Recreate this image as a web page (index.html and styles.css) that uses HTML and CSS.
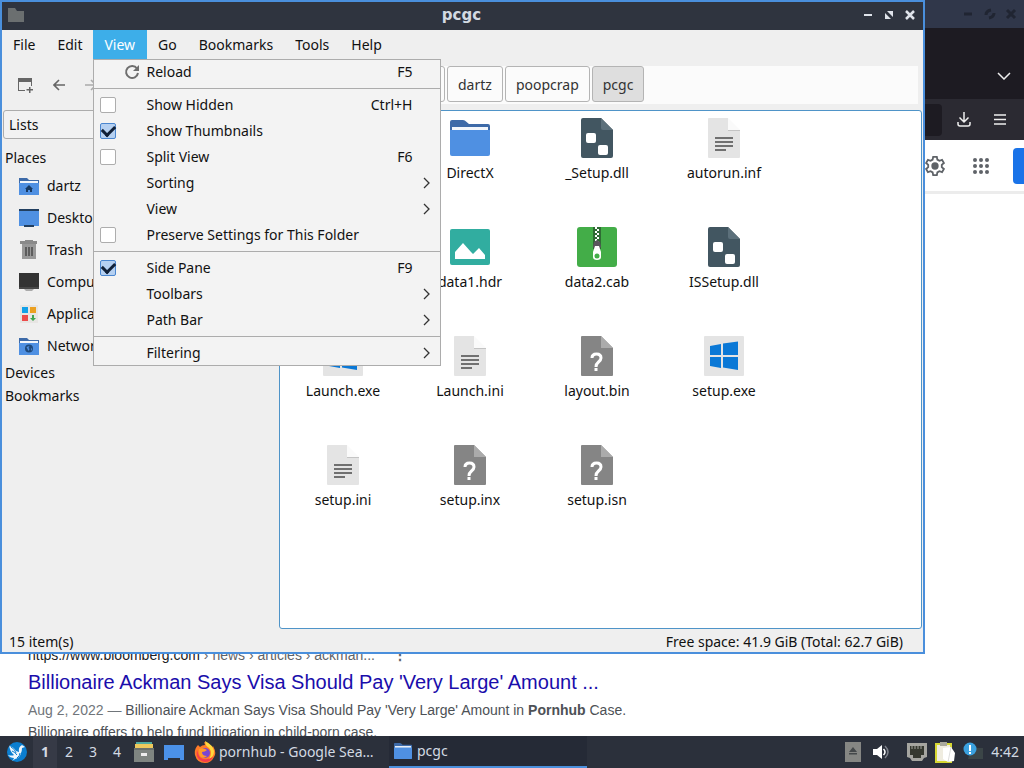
FILE: index.html
```html
<!DOCTYPE html>
<html lang="en">
<head>
  <meta charset="UTF-8">
  <title>pcgc</title>
  <link rel="stylesheet" href="styles.css">
</head>
<body>
  <!-- shared icon shapes -->
  <svg class="defs" aria-hidden="true">
    <symbol id="folder" viewBox="0 0 40 40">
      <path d="M0 4q0-2 2-2h11q2 0 3 1.500l3 2.500h19q2 0 2 2v10H0z" fill="#3d6aa8"/>
      <path d="M2 9h36v6H2z" fill="#f2f6fb"/>
      <path d="M0 12h40v24q0 2-2 2H2q-2 0-2-2z" fill="#4f90e2"/>
    </symbol>
    <symbol id="dll" viewBox="0 0 40 40">
      <path d="M6 0h18l12 12v26q0 2-2 2H6q-2 0-2-2V2q0-2 2-2z" fill="#425661"/>
      <path d="M24 0l12 12H26q-2 0-2-2z" fill="#5c707b"/>
      <rect x="9" y="15" width="10" height="10" rx="2" fill="#fff"/>
      <rect x="21" y="27" width="10" height="10" rx="2" fill="#fff"/>
    </symbol>
    <symbol id="text" viewBox="0 0 40 40">
      <path d="M5 0h19v12h12v27q0 1-1 1H5q-1 0-1-1V1q0-1 1-1z" fill="#e4e4e4"/>
      <path d="M24 12h12v1H24z" fill="#c4c4c4"/>
      <path d="M24 0l12 12H24z" fill="#fafafa"/>
      <path d="M11 20h18M11 24h18M11 28h18M11 32h11" stroke="#707070" stroke-width="2"/>
    </symbol>
    <symbol id="unknown" viewBox="0 0 40 40">
      <path d="M5 0h19l12 12v27q0 1-1 1H5q-1 0-1-1V1q0-1 1-1z" fill="#858585"/>
      <path d="M24 0l12 12H24z" fill="#ababab"/>
      <path d="M15 22q0-4 4.500-4t4.500 4q0 2-2.500 4t-2.500 5" fill="none" stroke="#fff" stroke-width="3"/>
      <path d="M17.500 32h3v3h-3z" fill="#fff"/>
    </symbol>
    <symbol id="exe" viewBox="0 0 40 40">
      <rect width="40" height="40" rx="1" fill="#e4e4e4"/>
      <path d="M6 10l11-2v11H6zM19 7.500L34 5.500V19H19zM6 21h11v11L6 30zM19 21h15v13l-15-2.500z" fill="#0a78d6"/>
    </symbol>
    <symbol id="image" viewBox="0 0 40 40">
      <rect y="2" width="40" height="36" rx="2" fill="#31ada0"/>
      <path d="M5 32v-7l8-9 8 9 2 2 6-6 6 7v4z" fill="#fff"/>
    </symbol>
    <symbol id="archive" viewBox="0 0 40 40">
      <rect width="40" height="40" rx="3" fill="#43ad48"/>
      <path d="M16 0h8v22h-8z" fill="#2f6b34"/>
      <path d="M19 0v16" stroke="#fff" stroke-width="2" stroke-dasharray="2 2"/>
      <path d="M21 2v16" stroke="#fff" stroke-width="2" stroke-dasharray="2 2"/>
      <path d="M17 15l-1 5 3 2h2l3-2-1-5-3-2z" fill="#5b565e"/>
      <path d="M18 19h4l2 6v5q0 3-4 3t-4-3v-5z" fill="#fff"/>
      <circle cx="20" cy="29" r="2.500" fill="#43ad48"/>
    </symbol>
    <symbol id="arrow" viewBox="0 0 8 12">
      <path d="M1 1l5 5-5 5" fill="none" stroke="#333" stroke-width="1.300"/>
    </symbol>
  </svg>

  <main class="desktop">
    <section class="browser">
      <div class="browser-title">
        <svg width="56" height="16" viewBox="0 0 56 16" stroke="#202532" stroke-width="3" fill="none"><path d="M2 8h8M24 9q0-4 5-5M32 7q0 4-5 5M45 4l8 8M53 4l-8 8"/></svg>
      </div>
      <div class="tabs">
        <button aria-label="List all tabs"><svg width="14" height="8" viewBox="0 0 14 8"><path d="M1 1l6 6 6-6" fill="none" stroke="#eee" stroke-width="1.500"/></svg></button>
      </div>
      <div class="browser-nav">
        <div class="address"></div>
        <button aria-label="Downloads"><svg width="14" height="16" viewBox="0 0 14 16" fill="none" stroke="#eee" stroke-width="1.500"><path d="M7 0v10M2.500 5.500L7 10l4.500-4.500M1 10v2q0 2 2 2h8q2 0 2-2v-2"/></svg></button>
        <button aria-label="Menu"><svg width="12" height="11" viewBox="0 0 12 11" stroke="#eee" stroke-width="1.500"><path d="M0 1h12M0 5.500h12M0 10h12"/></svg></button>
      </div>
      <header class="search-head">
        <button aria-label="Settings"><svg width="22" height="22" viewBox="0 0 24 24" fill="none" stroke="#5f6368" stroke-width="2"><path d="M10 2h4l.6 3 2.200 1.300 2.900-1 2 3.500-2.300 2v2.400l2.300 2-2 3.500-2.900-1-2.200 1.300-.6 3h-4l-.6-3-2.200-1.300-2.900 1-2-3.500 2.300-2v-2.400l-2.300-2 2-3.500 2.900 1L9.400 5z"/><circle cx="12" cy="12" r="3" fill="#5f6368"/></svg></button>
        <button aria-label="Google apps"><svg width="16" height="16" viewBox="0 0 16 16" fill="#5f6368"><circle cx="2" cy="2" r="2"/><circle cx="8" cy="2" r="2"/><circle cx="14" cy="2" r="2"/><circle cx="2" cy="8" r="2"/><circle cx="8" cy="8" r="2"/><circle cx="14" cy="8" r="2"/><circle cx="2" cy="14" r="2"/><circle cx="8" cy="14" r="2"/><circle cx="14" cy="14" r="2"/></svg></button>
        <button class="sign-in" aria-label="Sign in"></button>
      </header>
      <div class="results">
        <article class="result">
          <div class="cite"><span>https://www.bloomberg.com <i>› news › articles › ackman...</i></span><b>⋮</b></div>
          <h3><a href="#">Billionaire Ackman Says Visa Should Pay 'Very Large' Amount ...</a></h3>
          <p><span>Aug 2, 2022 —</span> Billionaire Ackman Says Visa Should Pay 'Very Large' Amount in <b>Pornhub</b> Case.<br>Billionaire offers to help fund litigation in child-porn case.</p>
        </article>
      </div>
    </section>

    <section class="window">
      <header class="titlebar">
        <svg width="16" height="14" viewBox="0 0 16 14"><path d="M0 0h7l2 3h7v11H0z" fill="#6b6f70"/></svg>
        <h1>pcgc</h1>
        <button aria-label="Minimize"><svg width="10" height="10" viewBox="0 0 10 10"><path d="M1 5h8" stroke="#dfe3ea" stroke-width="2"/></svg></button>
        <button aria-label="Maximize"><svg width="10" height="10" viewBox="0 0 10 10" fill="#dfe3ea"><path d="M3 1h6v6zM1 3v6h6z"/></svg></button>
        <button aria-label="Close"><svg width="10" height="10" viewBox="0 0 10 10"><path d="M1 1l8 8M9 1L1 9" stroke="#dfe3ea" stroke-width="2.500"/></svg></button>
      </header>

      <nav class="menubar">
        <button>File</button>
        <button>Edit</button>
        <div class="open">
          <button>View</button>
          <div class="menu">
            <button class="row"><svg width="16" height="16" viewBox="0 0 16 16"><path d="M13 4.500A6 6 0 1 0 14 9" fill="none" stroke="#6e6e6e" stroke-width="2"/><path d="M15 1v6H9z" fill="#6e6e6e"/></svg><span>Reload</span><kbd>F5</kbd></button>
            <hr>
            <label class="row"><input type="checkbox"><span>Show Hidden</span><kbd>Ctrl+H</kbd></label>
            <label class="row"><input type="checkbox" checked><span>Show Thumbnails</span></label>
            <label class="row"><input type="checkbox"><span>Split View</span><kbd>F6</kbd></label>
            <button class="row sub"><span>Sorting</span><svg class="arrow"><use href="#arrow"/></svg></button>
            <button class="row sub"><span>View</span><svg class="arrow"><use href="#arrow"/></svg></button>
            <label class="row"><input type="checkbox"><span>Preserve Settings for This Folder</span></label>
            <hr>
            <label class="row"><input type="checkbox" checked><span>Side Pane</span><kbd>F9</kbd></label>
            <button class="row sub"><span>Toolbars</span><svg class="arrow"><use href="#arrow"/></svg></button>
            <button class="row sub"><span>Path Bar</span><svg class="arrow"><use href="#arrow"/></svg></button>
            <hr>
            <button class="row sub"><span>Filtering</span><svg class="arrow"><use href="#arrow"/></svg></button>
          </div>
        </div>
        <button>Go</button>
        <button>Bookmarks</button>
        <button>Tools</button>
        <button>Help</button>
      </nav>

      <div class="toolbar">
        <div class="tools">
          <button aria-label="New tab"><svg width="16" height="16" viewBox="0 0 16 16" fill="#666"><path d="M1 1h14v8h-1V5H2v8h6v1H1z"/><path d="M12 10h1.500v2H16v1.500h-2.500V16H12v-2.500H9.500V12H12z"/></svg></button>
          <button aria-label="Back"><svg width="12" height="12" viewBox="0 0 12 12" fill="none" stroke="#666" stroke-width="1.600"><path d="M12 6H1M6 1L1 6l5 5"/></svg></button>
          <button aria-label="Forward"><svg width="12" height="12" viewBox="0 0 12 12" fill="none" stroke="#aaa" stroke-width="1.600"><path d="M0 6h11M6 1l5 5-5 5"/></svg></button>
        </div>
        <div class="pathbar">
          <button aria-label="home"></button>
          <button>dartz</button>
          <button>poopcrap</button>
          <button class="current">pcgc</button>
        </div>
      </div>

      <div class="content">
        <aside class="sidebar">
          <select aria-label="Side pane mode"><option>Lists</option></select>
          <h2>Places</h2>
          <ul>
            <li><svg viewBox="0 0 20 20"><path d="M0 2h8l2 2h10v5H0z" fill="#3d6aa8"/><path d="M1 5h18v3H1z" fill="#f2f6fb"/><path d="M0 7h20v12H0z" fill="#4f90e2"/><path d="M10 9l4 4h-1v3h-2v-2H9v2H7v-3H6z" fill="#183a63"/></svg>dartz</li>
            <li><svg viewBox="0 0 20 20"><path d="M0 1h20v17H0z" fill="#4f90e2"/><path d="M0 1h20v2H0zM5 17h10v2H5z" fill="#223f60"/></svg>Desktop</li>
            <li><svg viewBox="0 0 20 20"><path d="M1 1h5V0h8v1h4v3H1z" fill="#8a8a8a"/><path d="M3 4h14v15H3z" fill="#999"/><path d="M6 7h2v9H6zM9 7h2v9H9zM12 7h2v9h-2z" fill="#5d5d5d"/></svg>Trash</li>
            <li><svg viewBox="0 0 20 20"><path d="M0 1h20v16H0z" fill="#333"/><path d="M0 15h20v2H0z" fill="#484848"/><path d="M5 17h10l-2 2H7z" fill="#aaa"/></svg>Computer</li>
            <li><svg viewBox="0 0 20 20"><path d="M1 1h18v18H1z" fill="#e7e5e3"/><path d="M3 3h6v6H3z" fill="#12a0e8"/><path d="M11 3h6v6h-6z" fill="#eba021"/><path d="M3 11h6v6H3z" fill="#ec4b4b"/><path d="M13 11h2v3h2l-3 3-3-3h2z" fill="#3fa550"/></svg>Applications</li>
            <li><svg viewBox="0 0 20 20"><path d="M0 2h8l2 2h10v5H0z" fill="#3d6aa8"/><path d="M1 5h18v3H1z" fill="#f2f6fb"/><path d="M0 7h20v12H0z" fill="#4f90e2"/><circle cx="10" cy="12.500" r="4" fill="#1f4a7c"/><path d="M7.500 11l3-1-1 2 1 1-1 2zM12 12l1 1-1 2z" fill="#4f90e2"/></svg>Network</li>
          </ul>
          <h2>Devices</h2>
          <h2>Bookmarks</h2>
        </aside>

        <ul class="files">
          <li class="second"><svg><use href="#folder"/></svg>DirectX</li>
          <li><svg><use href="#dll"/></svg>_Setup.dll</li>
          <li><svg><use href="#text"/></svg>autorun.inf</li>
          <li class="second"><svg><use href="#image"/></svg>data1.hdr</li>
          <li><svg><use href="#archive"/></svg>data2.cab</li>
          <li><svg><use href="#dll"/></svg>ISSetup.dll</li>
          <li><svg><use href="#exe"/></svg>Launch.exe</li>
          <li><svg><use href="#text"/></svg>Launch.ini</li>
          <li><svg><use href="#unknown"/></svg>layout.bin</li>
          <li><svg><use href="#exe"/></svg>setup.exe</li>
          <li><svg><use href="#text"/></svg>setup.ini</li>
          <li><svg><use href="#unknown"/></svg>setup.inx</li>
          <li><svg><use href="#unknown"/></svg>setup.isn</li>
        </ul>
      </div>

      <footer class="statusbar">
        <span>15 item(s)</span>
        <span>Free space: 41.9 GiB (Total: 62.7 GiB)</span>
      </footer>
    </section>
  </main>

  <footer class="taskbar">
    <button class="start" aria-label="Applications"><svg width="22" height="22" viewBox="0 0 22 22"><circle cx="11" cy="11" r="10" fill="#0b7ed0"/><path d="M3 5q5 1 7 5l3 1q-1-5 3-7l3 2-3 1q0 3-1 5-1 5-6 6l-3 2q2-2 2-3-4 0-6-3 4 1 6 0-4-3-5-10z" fill="#eef6fc"/><path d="M5 6q4 2 5 6M6 10q3 1 5 4M11 17q3-2 3-5" fill="none" stroke="#0b7ed0"/></svg></button>
    <div class="pager">
      <button class="active">1</button>
      <button>2</button>
      <button>3</button>
      <button>4</button>
    </div>
    <button class="launcher" aria-label="Files"><svg width="20" height="20" viewBox="0 0 20 20"><path d="M2 0h16v4H2z" fill="#4eaaa0"/><path d="M1 2h18v4H1z" fill="#edc95c"/><path d="M0 6h20v14H0z" fill="#7f8581"/><path d="M0 6h20v2H0z" fill="#696f6b"/><path d="M7 11h6v3H7z" fill="#eee"/></svg></button>
    <button class="launcher" aria-label="Show desktop"><svg width="20" height="18" viewBox="0 0 20 18"><path d="M0 2h20v15h-4v-2H4v2H0z" fill="#4b91e8"/></svg></button>
    <div class="tasks">
      <button class="task"><svg width="22" height="22" viewBox="0 0 22 22"><path d="M4 4l2 2q2-2 5-2l-1-3q7 2 8 6l1-2q4 7 1 11-3 6-9 6Q3 22 1 14 0 8 4 4z" fill="#ff7b29"/><path d="M11 0q8 4 9 10 0 6-5 8 4-6 0-11-4-2-4-7z" fill="#ffd83d"/><path d="M3 9q-2 10 8 12 6 0 8-5-9 5-14-1z" fill="#f63c4b"/><circle cx="11" cy="12" r="5" fill="#7a45d1"/><path d="M5 8q4-2 8 1-2 2-5 2 0 4 5 4-3 3-6 1-3-3-2-8z" fill="#ff9a28"/></svg><span>pornhub - Google Sea…</span></button>
      <button class="task current"><svg width="18" height="18"><use href="#folder"/></svg><span>pcgc</span></button>
    </div>
    <div class="tray">
      <svg class="eject" width="16" height="20" viewBox="0 0 16 20"><path d="M0 0h16v20H0z" fill="#858683"/><path d="M8 5l4 5H4zM4 11h8v1.500H4z" fill="#44484a"/></svg>
      <svg width="16" height="16" viewBox="0 0 16 16"><path d="M0 5h4l5-4v14l-5-4H0z" fill="#fff"/><path d="M10.500 5q3 3 0 6" stroke="#fff" stroke-width="1.500" fill="none"/><path d="M12 2q6 6 0 12" stroke="#7d818a" stroke-width="1.500" fill="none"/></svg>
      <svg class="net" width="20" height="18" viewBox="0 0 20 18"><path d="M0 0h20v14l-3 1-2 3H5l-2-3-3-1z" fill="#a5a5a0"/><path d="M3 3h14v9h-3v3H6v-3H3z" fill="#35382f"/><path d="M5 3v3M8 3v3M11 3v3M14 3v3" stroke="#a5a5a0"/></svg>
      <svg width="20" height="22" viewBox="0 0 20 22"><path d="M1 3h15v18H1z" fill="#efece0" stroke="#d6d733" stroke-width="2"/><path d="M5 1h7v4H5z" fill="#aaa99e"/><path d="M8 7l8-1 4 6-1 8-6 1-5-3z" fill="#fff"/><path d="M16 6l-3 15" stroke="#ddd"/></svg>
      <svg width="20" height="20" viewBox="0 0 20 20"><path d="M8 6h12v11H5z" fill="#3b4547"/><circle cx="7" cy="7" r="6.500" fill="#3ba1df"/><path d="M6 3h2v6H6zM6 10h2v2H6z" fill="#fff"/></svg>
      <time>4:42</time>
    </div>
  </footer>
</body>
</html>
```
FILE: styles.css
```css
* {
  box-sizing: border-box;
}
body {
  margin: 0;
  height: 100vh;
  display: flex;
  flex-direction: column;
  overflow: hidden;
  font-family: "Noto Sans", sans-serif;
  font-size: 14px;
  line-height: 22px;
  color: #111;
}
button, select {
  font: inherit;
  color: inherit;
  background: none;
  border: none;
  padding: 0;
}
button {
  display: flex;
  align-items: center;
  justify-content: center;
}
svg {
  flex: none;
}
ul {
  list-style: none;
  margin: 0;
  padding: 0;
}
.defs {
  position: absolute;
  width: 0;
  height: 0;
}
.desktop {
  flex: 1;
  min-height: 0;
  position: relative;
}

/* browser behind */
.browser {
  height: 100%;
  display: flex;
  flex-direction: column;
  background: #fff;
  font-family: "Liberation Sans", sans-serif;
}
.browser-title, .tabs, .browser-nav, .search-head {
  flex: none;
  display: flex;
  align-items: center;
  justify-content: flex-end;
}
.browser-title {
  height: 28px;
  padding-right: 6px;
  background: #30374a;
}
.tabs {
  height: 71px;
  padding: 24px 13px 0 0;
  background: #1d1b22;
}
.browser-nav {
  height: 41px;
  gap: 23px;
  padding-right: 18px;
  background: #2b2a32;
}
.address {
  flex: 1;
  height: 32px;
  margin-right: -8px;
  border-radius: 4px;
  background: #1d1b22;
}
.search-head {
  height: 54px;
  gap: 27px;
  border-bottom: 3px solid #ececec;
}
.sign-in {
  width: 11px;
  height: 36px;
  margin-left: -3px;
  border-radius: 4px 0 0 4px;
  background: #1a73e8;
}
.results {
  flex: 1;
  min-height: 0;
  display: flex;
  flex-direction: column;
  justify-content: flex-end;
  overflow: hidden;
  padding-left: 28px;
}
.result {
  margin-bottom: -7px;
  color: #4d5156;
}
.cite {
  display: flex;
  gap: 18px;
  line-height: 20px;
  color: #202124;
}
.cite i {
  font-style: normal;
  color: #5f6368;
}
.cite b {
  color: #5f6368;
}
.result h3 {
  margin: 0;
  font-size: 20px;
  font-weight: normal;
  line-height: 34px;
}
.result a {
  color: #1a0dab;
  text-decoration: none;
}
.result p {
  margin: 0;
}
.result p span {
  color: #70757a;
}

/* file manager */
.window {
  position: absolute;
  top: 0;
  left: 0;
  right: 99px;
  bottom: 82px;
  display: flex;
  flex-direction: column;
  border: 2px solid #4a8fdc;
  background: #efefef;
}
.titlebar {
  height: 28px;
  display: flex;
  align-items: center;
  gap: 11px;
  padding: 0 8px 2px 6px;
  background: #2f343f;
  color: #d3dae3;
}
.titlebar h1 {
  flex: 1;
  margin: 0;
  padding-left: 36px;
  font: bold 15px/22px "DejaVu Sans", sans-serif;
  text-align: center;
}
.menubar {
  height: 29px;
  display: flex;
}
.menubar > button, .open > button {
  height: 29px;
  padding: 0 11px;
}
.open > button {
  padding: 0 12px 0 11px;
}
.open {
  position: relative;
  background: #3daee9;
}
.open > button {
  color: #fff;
}
.menu {
  position: absolute;
  z-index: 1;
  top: 100%;
  left: 0;
  width: 348px;
  background: #f3f3f3;
  box-shadow: inset 0 0 0 1px #acacac;
}
.row {
  width: 100%;
  height: 26px;
  display: grid;
  grid-template-columns: 46px 1fr auto;
  align-items: center;
  padding: 0 29px 0 7px;
  text-align: left;
}
.row.sub {
  padding-right: 10px;
}
.row span {
  grid-column: 2;
}
.row > svg:first-child {
  justify-self: end;
  margin-right: 6px;
}
.row kbd {
  font: inherit;
}
.row .arrow {
  width: 8px;
  height: 12px;
}
.row input {
  appearance: none;
  display: grid;
  place-items: center;
  width: 16px;
  height: 16px;
  margin: 0;
  border: 1px solid #adadad;
  border-radius: 2px;
  background: #fff;
}
.row input:checked {
  border-color: #4a86cf;
  background: #b5d0f1;
}
.row input:checked::after {
  content: "";
  width: 10px;
  height: 6px;
  margin-bottom: 4px;
  border: solid #102038;
  border-width: 0 0 3px 3px;
  transform: rotate(-45deg);
}
.menu hr {
  height: 1px;
  margin: 3px 0;
  border: none;
  background: #acacac;
}
.toolbar {
  height: 51px;
  display: flex;
  align-items: center;
  padding-right: 5px;
}
.tools {
  width: 391px;
  display: flex;
  gap: 20px;
  padding-left: 15px;
}
.pathbar {
  flex: 1;
  display: flex;
  gap: 2px;
  height: 38px;
  padding-bottom: 2px;
  background: #fbfbfb;
}
.pathbar button {
  min-width: 52px;
  padding: 2px 10px 0;
  border: 1px solid #b4b4b4;
  border-radius: 3px;
  background: #fbfbfb;
  color: #333;
}
.pathbar .current {
  background: #dedede;
}
.content {
  flex: 1;
  min-height: 0;
  display: flex;
  padding-right: 1px;
}
.sidebar {
  width: 277px;
}
.sidebar select {
  appearance: none;
  display: block;
  width: 274px;
  height: 29px;
  margin: 0 0 7px 1px;
  padding: 0 5px;
  border: 1px solid #acacac;
  border-radius: 3px;
  background: #f2f2f2;
}
.sidebar h2 {
  margin: 0;
  padding-left: 3px;
  font-size: 14px;
  font-weight: normal;
  line-height: 23px;
}
.sidebar li {
  height: 32px;
  display: flex;
  align-items: center;
  gap: 8px;
  padding: 1px 0 0 17px;
}
.sidebar li svg {
  width: 20px;
  height: 20px;
}
.files {
  flex: 1;
  display: grid;
  grid-template-columns: repeat(4, 127px);
  grid-auto-rows: 109px;
  align-content: start;
  padding-top: 7px;
  border: 1px solid #4f94c8;
  border-radius: 3px;
  background: #fff;
}
.files li {
  display: flex;
  flex-direction: column;
  align-items: center;
  gap: 4px;
  padding-right: 1px;
}
.files svg {
  width: 40px;
  height: 40px;
}
.files .second {
  grid-column: 2;
}
.statusbar {
  height: 23px;
  display: flex;
  align-items: center;
  justify-content: space-between;
  padding: 2px 20px 0 7px;
}

/* taskbar */
.taskbar {
  height: 32px;
  display: flex;
  align-items: center;
  background: #2b303b;
  color: #d3dae3;
}
.taskbar button {
  height: 32px;
}
.start {
  width: 33px;
}
.pager {
  display: flex;
}
.pager button {
  width: 24px;
}
.pager .active {
  background: #363a46;
  font-weight: bold;
}
.launcher {
  width: 30px;
}
.tasks {
  flex: 1;
  min-width: 0;
  display: flex;
  margin-left: 2px;
}
.tasks .task {
  flex: 0 1 198px;
  min-width: 0;
  justify-content: flex-start;
  gap: 3px;
  padding: 0 8px 0 3px;
}
.task span {
  overflow: hidden;
  text-overflow: ellipsis;
  white-space: nowrap;
}
.task.current {
  border-bottom: 2px solid #4a8fdc;
  background: #252a36;
}
.task.current svg {
  margin: 0 2px;
}
.tray {
  display: flex;
  align-items: center;
  gap: 8px;
  padding-right: 5px;
}
.eject {
  margin-right: 4px;
}
.net {
  margin-left: 10px;
}
```
